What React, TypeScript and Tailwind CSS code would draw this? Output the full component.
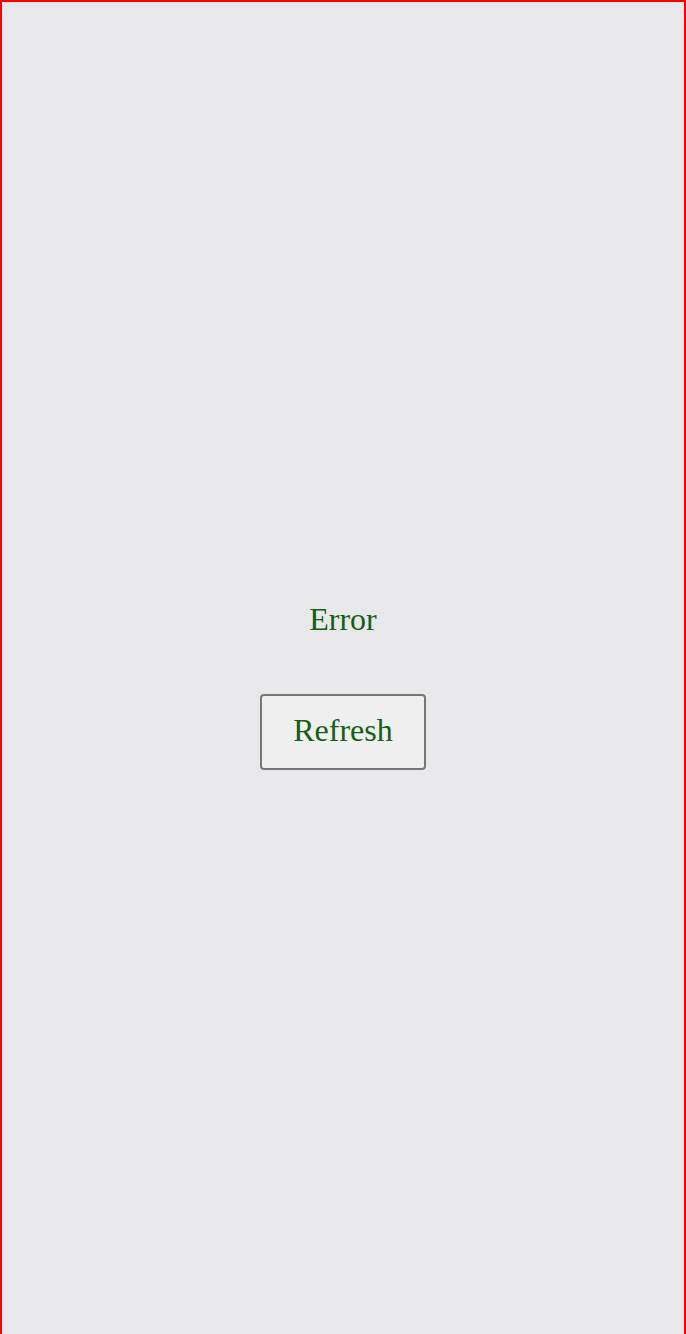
export default function App() {
  return (
    <div className="h-[1340px] border-2 border-[#ff0000] bg-[#e8e8ea] font-['Liberation_Serif',serif] text-[#145f14]">
      <div className="flex flex-col items-center pt-[599px]">
        <p className="text-[32px] leading-[37px]">Error</p>
        <button className="mt-[56px] h-[76px] w-[166px] rounded-[4px] border-2 border-[#767676] bg-[#efefef] pb-[4px] text-[32px] leading-[37px]">
          Refresh
        </button>
      </div>
    </div>
  );
}
